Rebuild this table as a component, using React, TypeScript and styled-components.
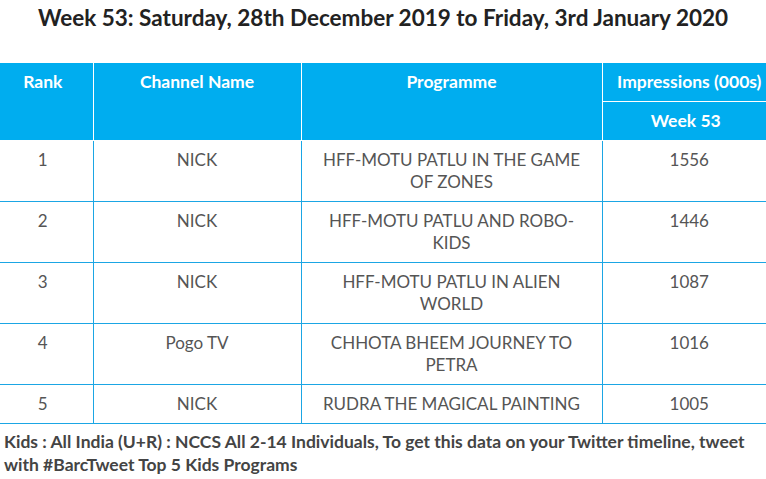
import styled, { createGlobalStyle } from "styled-components";

const GlobalStyle = createGlobalStyle`
  html, body {
    margin: 0;
    padding: 0;
    background: #ffffff;
  }
  body {
    font-family: Lato, "Open Sans", sans-serif;
  }
`;

const BLUE = "#00adef";
const LINE = "#1ba6e4";

interface Row {
  rank: number;
  channel: string;
  programme: string;
  impressions: number;
}

const rows: Row[] = [
  { rank: 1, channel: "NICK", programme: "HFF-MOTU PATLU IN THE GAME OF ZONES", impressions: 1556 },
  { rank: 2, channel: "NICK", programme: "HFF-MOTU PATLU AND ROBO-KIDS", impressions: 1446 },
  { rank: 3, channel: "NICK", programme: "HFF-MOTU PATLU IN ALIEN WORLD", impressions: 1087 },
  { rank: 4, channel: "Pogo TV", programme: "CHHOTA BHEEM JOURNEY TO PETRA", impressions: 1016 },
  { rank: 5, channel: "NICK", programme: "RUDRA THE MAGICAL PAINTING", impressions: 1005 },
];

export default function App() {
  return (
    <>
      <GlobalStyle />
      <Page>
        <Title>Week 53: Saturday, 28th December 2019 to Friday, 3rd January 2020</Title>
        <Table>
          <colgroup>
            <col style={{ width: 93 }} />
            <col style={{ width: 208 }} />
            <col style={{ width: 301 }} />
            <col />
          </colgroup>
          <thead>
            <tr>
              <HeadCell rowSpan={2}>Rank</HeadCell>
              <HeadCell rowSpan={2}>Channel Name</HeadCell>
              <HeadCell rowSpan={2}>Programme</HeadCell>
              <HeadCell>Impressions (000s)</HeadCell>
            </tr>
            <tr>
              <HeadCell>Week 53</HeadCell>
            </tr>
          </thead>
          <tbody>
            {rows.map((r) => (
              <tr key={r.rank}>
                <BodyCell>{r.rank}</BodyCell>
                <BodyCell>{r.channel}</BodyCell>
                <BodyCell>{r.programme}</BodyCell>
                <BodyCell>{r.impressions}</BodyCell>
              </tr>
            ))}
          </tbody>
        </Table>
        <Note>
          Kids : All India (U+R) : NCCS All 2-14 Individuals, To get this data on your Twitter timeline, tweet with
          #BarcTweet Top 5 Kids Programs
        </Note>
      </Page>
    </>
  );
}

const Page = styled.div`
  width: 766px;
  display: flex;
  flex-direction: column;
`;

const Title = styled.h2`
  margin: 5px 0 0;
  font-size: 22.5px;
  line-height: 26px;
  font-weight: 700;
  color: #222;
  text-align: center;
`;

const Table = styled.table`
  margin-top: 32px;
  width: 100%;
  border-collapse: collapse;
  table-layout: fixed;
`;

const HeadCell = styled.th`
  background: ${BLUE};
  color: #ffffff;
  font-size: 17.5px;
  font-weight: 700;
  line-height: 22px;
  padding: 8px 4px;
  vertical-align: top;
  text-align: center;
  border: 1px solid #ffffff;
  border-top: none;
  white-space: nowrap;

  &:first-child {
    border-left: none;
    padding-right: 11px;
  }
  &:last-child {
    border-right: none;
    padding-left: 14px;
  }
`;

const BodyCell = styled.td`
  color: #555;
  font-size: 17px;
  line-height: 22px;
  padding: 8px 12px;
  vertical-align: top;
  text-align: center;
  border: 1px solid ${LINE};
  border-top: none;

  &:first-child {
    border-left: none;
    padding-left: 5px;
  }
  &:last-child {
    border-right: none;
    padding-left: 14px;
    padding-right: 4px;
  }
`;

const Note = styled.p`
  margin: 6px 0 0;
  padding: 0 4px;
  font-size: 17.5px;
  line-height: 23px;
  font-weight: 700;
  color: #444;
`;
